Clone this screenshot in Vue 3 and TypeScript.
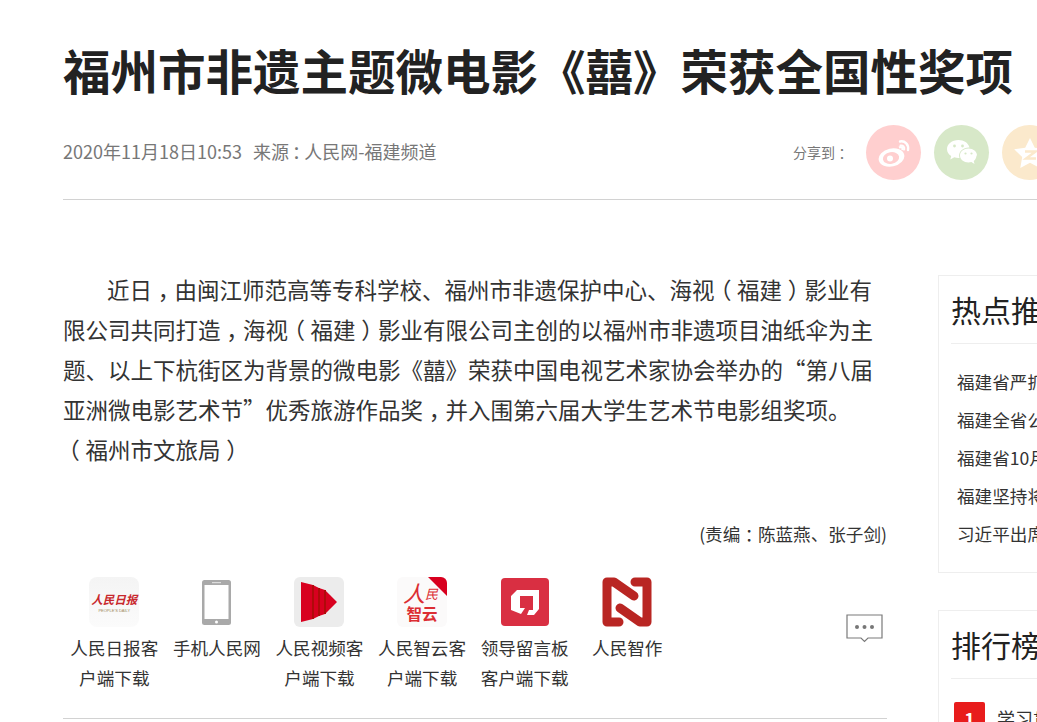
<script setup lang="ts">
const hot: string[] = ['福建省严抓安全', '福建全省公安机关', '福建省10月份数据', '福建坚持将生态', '习近平出席会议']
interface AppItem { key: string; lines: string[] }
const apps: AppItem[] = [
  { key: 'daily', lines: ['人民日报客', '户端下载'] },
  { key: 'phone', lines: ['手机人民网'] },
  { key: 'video', lines: ['人民视频客', '户端下载'] },
  { key: 'cloud', lines: ['人民智云客', '户端下载'] },
  { key: 'board', lines: ['领导留言板', '客户端下载'] },
  { key: 'zhizuo', lines: ['人民智作'] },
]
</script>

<template>
  <div class="page">
    <div class="inner">
      <h1>福州市非遗主题微电影《囍》荣获全国性奖项</h1>
      <div class="meta">
        <div class="source">
          <span>2020年11月18日10:53</span>
          <span>来源<span class="p colon">：</span>人民网-福建频道</span>
        </div>
        <div class="share">
          <span class="share-label">分享到<span class="p">：</span></span>
          <span class="circle weibo">
            <svg width="36" height="30" viewBox="0 0 36 30" fill="none">
              <ellipse cx="15.500" cy="19.500" rx="13" ry="9" fill="#fff" transform="rotate(-12 15.500 19.500)" />
              <path d="M23 9.500c2.500-1 4-.2 3.600 2.600" stroke="#fff" stroke-width="2.400" />
              <ellipse cx="15" cy="20" rx="8.200" ry="5.800" fill="#ffcfcf" transform="rotate(-10 15 20)" />
              <circle cx="14" cy="20.500" r="3" fill="#fff" />
              <path d="M24 3.500c5-1 9 3 8 8.500" stroke="#fff" stroke-width="2.400" stroke-linecap="round" />
              <path d="M24.500 7.600c2.600-.4 4.300 1.400 3.700 4" stroke="#fff" stroke-width="2" stroke-linecap="round" />
            </svg>
          </span>
          <span class="circle wechat">
            <svg width="32" height="28" viewBox="0 0 32 28">
              <path d="M12.500 1C6 1 1 5 1 10c0 3 1.600 5.400 4.200 7.100L4.300 20.500l4-2.200c1.400.4 2.800.6 4.200.6h1c-.2-.8-.4-1.500-.4-2.300 0-4.600 4.200-8.200 9.500-8.200h.9C22.300 4 17.900 1 12.500 1z" fill="#fff" />
              <path d="M31 16.500c0-3.800-3.800-7-8.500-7s-8.500 3.200-8.500 7 3.800 7 8.500 7c1 0 2-.1 2.900-.4l3.100 1.800-.8-2.900c1.700-1.200 2.800-3.400 2.800-5.500z" fill="#fff" />
              <circle cx="8.500" cy="7" r="1.400" fill="#d7e8c8" /><circle cx="16.500" cy="7" r="1.400" fill="#d7e8c8" />
              <circle cx="19.500" cy="14.500" r="1.100" fill="#d7e8c8" /><circle cx="25.500" cy="14.500" r="1.100" fill="#d7e8c8" />
            </svg>
          </span>
          <span class="circle qzone">
            <svg width="34" height="32" viewBox="0 0 34 32">
              <path d="M17 1l4.800 9.800 11 1.500-8 7.700 1.900 10.900L17 25.700 7.300 30.900 9.200 20l-8-7.700 11-1.500z" fill="#fff" />
              <path d="M12 14.500h10.500L13 21.500h10" stroke="#fbe9cc" stroke-width="2.400" fill="none" />
            </svg>
          </span>
        </div>
      </div>

      <div class="content">
        <div class="article">
          <p class="body">近日<span class="p">，</span>由闽江师范高等专科学校、福州市非遗保护中心、海视<span class="p">（</span>福建<span class="p">）</span>影业有限公司共同打造<span class="p">，</span>海视<span class="p">（</span>福建<span class="p">）</span>影业有限公司主创的以福州市非遗项目油纸伞为主题、以上下杭街区为背景的微电影《囍》荣获中国电视艺术家协会举办的“第八届亚洲微电影艺术节”优秀旅游作品奖<span class="p">，</span>并入围第六届大学生艺术节电影组奖项。<br /><span class="p">（</span>福州市文旅局<span class="p">）</span></p>
          <p class="editor">(责编<span class="p">：</span>陈蓝燕、张子剑)</p>
          <div class="apps">
            <div class="app-list">
              <div v-for="a in apps" :key="a.key" class="app">
                <div class="app-icon">
                  <div v-if="a.key === 'daily'" class="logo-daily">
                    <span class="daily-name">人民日报</span>
                    <span class="daily-en">PEOPLE'S DAILY</span>
                  </div>
                  <svg v-else-if="a.key === 'phone'" width="29" height="45" viewBox="0 0 29 45">
                    <rect x="0" y="0" width="29" height="45" rx="2.500" fill="#a9a9a9" />
                    <rect x="2.500" y="5" width="24" height="34" fill="#fff" />
                    <rect x="10" y="2" width="9" height="1.200" fill="#ddd" />
                    <circle cx="14.500" cy="42" r="1.500" fill="#fff" />
                  </svg>
                  <div v-else-if="a.key === 'video'" class="logo-video">
                    <svg width="36" height="40" viewBox="0 0 36 40">
                      <path d="M0 0L12 3 18 6 24 8 29 13 36 20 29 27 24 32 18 34 12 37 0 40z" fill="#d8001f" />
                      <path d="M12 3v34M18 6v28M24 8v24" stroke="#b00a0a" stroke-width="2" fill="none" />
                    </svg>
                  </div>
                  <div v-else-if="a.key === 'cloud'" class="logo-cloud">
                    <span class="ribbon"></span>
                    <span class="cloud-top"><span class="cloud-ren">人</span><span class="cloud-min">民</span></span>
                    <span class="cloud-bottom">智云</span>
                  </div>
                  <svg v-else-if="a.key === 'board'" width="48" height="48" viewBox="0 0 48 48">
                    <rect width="48" height="48" rx="4" fill="#d92f42" />
                    <path d="M16 12H38V31L33 37H26L28 32H32V18H19V30H24L20 36 10 32V18z" fill="#fff" />
                  </svg>
                  <svg v-else width="50" height="50" viewBox="0 0 50 50" fill="none">
                    <path d="M17 45H5V5H12L32 19" stroke="#b92623" stroke-width="9" stroke-linejoin="round" stroke-linecap="round" />
                    <path d="M33 5H45V45H38L18 31" stroke="#b92623" stroke-width="9" stroke-linejoin="round" stroke-linecap="round" />
                  </svg>
                </div>
                <div class="app-label">
                  <div v-for="l in a.lines" :key="l">{{ l }}</div>
                </div>
              </div>
            </div>
            <svg class="comment" width="37" height="30" viewBox="0 0 37 30">
              <path d="M1 1h35v23H22l-3.500 3.500L15 24H1z" fill="#fff" stroke="#7a7a7a" stroke-width="1.200" />
              <circle cx="11" cy="13" r="2" fill="#777" /><circle cx="18.500" cy="13" r="2" fill="#777" /><circle cx="26" cy="13" r="2" fill="#777" />
            </svg>
          </div>
        </div>

        <aside class="side">
          <section class="card hot">
            <h2>热点推荐</h2>
            <ul>
              <li v-for="t in hot" :key="t">{{ t }}</li>
            </ul>
          </section>
          <section class="card rank">
            <h2>排行榜</h2>
            <div class="rank-row"><span class="badge">1</span><span>学习贯彻</span></div>
          </section>
        </aside>
      </div>
    </div>
  </div>
</template>

<style>
html, body { margin: 0; background: #fff; overflow: hidden; }
</style>

<style scoped>
.page {
  width: 1037px;
  height: 722px;
  overflow: hidden;
  background: #fff;
  font-family: "Noto Sans CJK SC", "Liberation Sans", sans-serif;
}
.inner { width: 1237px; padding-left: 63px; padding-top: 40px; box-sizing: border-box; }
h1 {
  margin: 0;
  font-size: 47.500px;
  line-height: 60px;
  height: 60px;
  font-weight: 700;
  color: #222;
  white-space: nowrap;
}
.p { display: inline-block; width: 1em; text-align: center; font-feature-settings: "halt"; text-indent: 0; }
.colon { width: .85em; }
.meta {
  display: flex;
  justify-content: space-between;
  align-items: center;
  margin-top: 25px;
  padding-bottom: 19px;
  border-bottom: 1px solid #d2d2d2;
}
.source { display: flex; gap: 11px; font-size: 18px; color: #777; margin-bottom: 4px; }
.share { display: flex; align-items: center; gap: 13px; width: 443px; flex: none; }
.share-label { font-size: 14px; color: #777; width: 59px; flex: none; margin-bottom: 2px; text-indent: -1px; }
.circle {
  width: 55px;
  height: 55px;
  border-radius: 50%;
  flex: none;
  display: flex;
  align-items: center;
  justify-content: center;
}
.weibo { background: #ffcfcf; }
.wechat { background: #d7e8c8; }
.qzone { background: #fbe9cc; }
.content { display: flex; align-items: flex-start; gap: 51px; margin-top: 69px; }
.article { width: 824px; flex: none; }
.body {
  margin: 0;
  font-size: 22.500px;
  line-height: 40px;
  color: #333;
  text-indent: 44px;
}
.editor {
  margin: 50px 0 0;
  text-align: right;
  font-size: 17.600px;
  line-height: 30px;
  color: #333;
}
.apps { display: flex; position: relative; margin-top: 28px; padding-bottom: 25px; border-bottom: 1px solid #d2d2d2; }
.app-list { display: flex; }
.app { width: 102.600px; display: flex; flex-direction: column; align-items: center; flex: none; }
.app-icon { width: 50px; height: 50px; display: flex; align-items: center; justify-content: center; }
.app-label { margin-top: 6px; height: 60px; font-size: 17.600px; line-height: 30px; color: #333; text-align: center; white-space: nowrap; }
.comment { margin-left: 167px; margin-top: 37px; flex: none; }
.logo-daily {
  width: 50px; height: 50px; border-radius: 8px; background: linear-gradient(#f4f4f4, #fbfbfb);
  display: flex; flex-direction: column; align-items: center; justify-content: center;
}
.daily-name { font-size: 11.500px; line-height: 14px; font-weight: 700; color: #c8282d; font-style: italic; white-space: nowrap; }
.daily-en { font-size: 4px; line-height: 5px; color: #a08a5a; font-family: "Liberation Sans", sans-serif; white-space: nowrap; margin-top: 2px; }
.logo-video { width: 50px; height: 50px; border-radius: 6px; background: #ececec; display: flex; align-items: center; justify-content: center; }
.logo-cloud { width: 50px; height: 50px; border-radius: 6px; background: #fbfafa; display: flex; flex-direction: column; align-items: center; position: relative; overflow: hidden; color: #dc2d33; }
.ribbon { position: absolute; right: 0; top: 0; border-style: solid; border-width: 0 19px 19px 0; border-color: transparent #d8001f transparent transparent; }
.cloud-top { display: flex; align-items: flex-end; height: 24px; margin-top: 3px; margin-right: 3px; font-style: italic; }
.cloud-ren { font-size: 22px; line-height: 24px; }
.cloud-min { font-size: 13px; line-height: 20px; }
.cloud-bottom { font-size: 15.500px; line-height: 18px; font-weight: 700; }
.side { width: 296px; flex: none; margin-top: 6px; display: flex; flex-direction: column; gap: 37px; }
.card { border: 1px solid #eee; box-sizing: border-box; padding: 0 12px; }
.hot { height: 298px; }
.rank { height: 300px; }
h2 {
  margin: 0;
  font-size: 30px;
  font-weight: 400;
  color: #222;
  height: 67px;
  line-height: 66px;
  border-bottom: 1px solid #eee;
  white-space: nowrap;
}
.hot ul { list-style: none; margin: 18.500px 0 0; padding: 0 0 0 6px; }
.hot li { font-size: 17.600px; line-height: 38px; color: #333; white-space: nowrap; }
.rank-row { display: flex; align-items: center; gap: 12px; margin-top: 23px; font-size: 18px; color: #333; }
.rank-row .badge {
  width: 31px; height: 31px; background: #e81c1c; color: #fff; border-radius: 2px;
  display: flex; align-items: center; justify-content: center; font-weight: 700; margin-left: 3px;
}
</style>
